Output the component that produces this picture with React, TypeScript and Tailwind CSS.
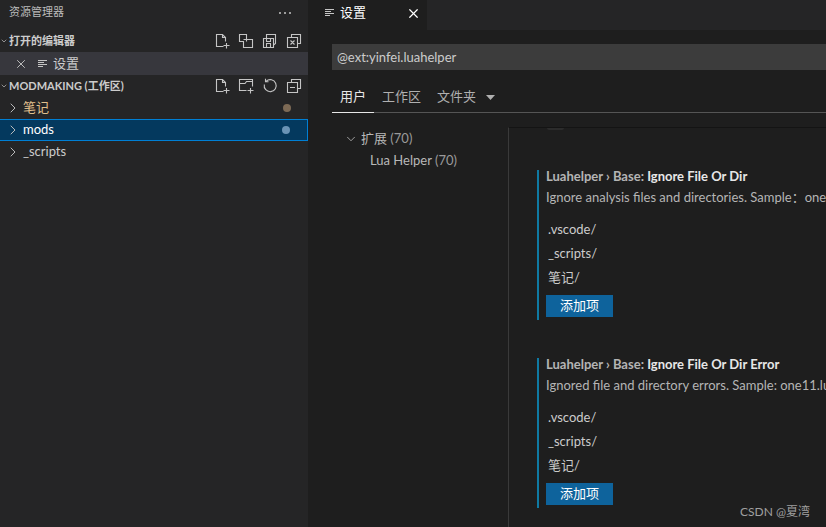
import { ChevronDown, ChevronRight, X } from "lucide-react"

const font = "font-['Lato','Noto_Sans_CJK_SC',sans-serif]"

const ListIcon = ({ className = "" }: { className?: string }) => (
  <svg width="10" height="10" viewBox="0 0 10 10" className={className} fill="none" stroke="currentColor" strokeWidth="1">
    <path d="M0 1.5h9M0 3.5h6M0 5.5h9M0 7.5h5" />
  </svg>
)

const HeaderIcon = ({ d }: { d: string }) => (
  <svg width="16" height="16" viewBox="0 0 16 16" fill="none" stroke="#c5c5c5" strokeWidth="1.1">
    <path d={d} />
  </svg>
)

const newFile = "M9.5 13.5H2.5V1.5H8.5L11.5 4.5V8.5M8.5 1.5V4.5H11.5M12.5 10V15.5M9.5 12.5H15.5"
const newFolder = "M8.5 12.5H1.5V1.5H14.5V8.5M1.5 5.5H7L8.5 3.5H14.5M12.5 10V15.5M9.5 12.5H15.5"
const saveAll = "M1.5 5.5H4.5V1.5H13.5V10.5L11.5 12M1.5 14.5H11.5V5.5H1.5V14.5ZM4.5 5.5V8.5H8.5V5.5M4.5 14.5V10.5H8.5V14.5"
const closeAll = "M5.5 4.5V1.5H14.5V10.5H11.5M1.5 4.5H11.5V14.5H1.5V4.5ZM4.5 7.5L8.5 11.5M8.5 7.5L4.5 11.5"
const collapse = "M5.5 4.5V1.5H14.5V10.5H11.5M1.5 4.5H11.5V14.5H1.5V4.5ZM4 9.5H9"
const split = "M1.5 1.5H8.5V6.5H14.5V14.5H5.5V8.5H1.5V1.5ZM5.5 6.5H8.5V8.5"
const refresh = "M4.2 3.2A6 6 0 1 1 2.3 6.5M3.5 0.8V3.8H6.5"

const SectionHeader = ({ label, icons }: { label: string; icons: string[] }) => (
  <div className="flex h-[22px] items-center pl-[0px] pr-[6px] text-[11px] font-bold text-[#cccccc]">
    <ChevronDown size={8} strokeWidth={2} className="mr-[1px] text-[#c5c5c5]" />
    <span className="flex-1 pt-[1px]">{label}</span>
    <div className="flex gap-[8px]">
      {icons.map((d, i) => (
        <HeaderIcon key={i} d={d} />
      ))}
    </div>
  </div>
)

const TreeRow = ({ label, color, dot, selected }: { label: string; color: string; dot?: string; selected?: boolean }) => (
  <div
    className={`flex h-[22px] items-center pr-[17px] text-[13px] ${
      selected ? "border border-[#007fd4] border-l-0 bg-[#04395e] pl-[5px]" : "pl-[5px]"
    }`}
    style={{ color }}
  >
    <ChevronRight size={16} strokeWidth={1.4} className="mr-[2px] shrink-0 text-[#c5c5c5]" />
    <span className="flex-1">{label}</span>
    {dot && <span className="h-2 w-2 rounded-full" style={{ backgroundColor: dot }} />}
  </div>
)

const Setting = ({ name, desc }: { name: string; desc: string }) => (
  <div className="h-[150px] w-[400px] border-l-2 border-[#0f7aa3] pl-[7px] whitespace-nowrap">
    <div className="flex h-[14px] items-center text-[13px] font-bold text-[#c5c5c5]">
      <span className="opacity-90">Luahelper › Base:&nbsp;</span>
      <span className="text-[#e7e7e7]">{name}</span>
    </div>
    <div className="mt-[4px] flex h-[20px] items-center text-[13px] text-[#b5b5b5]">{desc}</div>
    <div className="mt-[10px] flex flex-col pl-[2px] text-[13px] text-[#cccccc]">
      <div className="flex h-[24px] items-center">.vscode/</div>
      <div className="flex h-[24px] items-center">_scripts/</div>
      <div className="flex h-[24px] items-center">笔记/</div>
    </div>
    <div className="mt-[5px] flex h-[22px] w-[67px] items-center justify-center bg-[#0e639c] text-[13px] text-white">
      添加项
    </div>
  </div>
)

export default function App() {
  return (
    <div className={`relative flex h-[527px] w-[826px] overflow-hidden bg-[#1e1e1e] ${font}`}>
      {/* Explorer */}
      <div className="flex w-[308px] shrink-0 flex-col bg-[#252526]">
        <div className="flex h-[30px] items-center justify-between pl-[9px] pr-[16px] pb-[5px] text-[11px] text-[#bbbbbb]">
          <span>资源管理器</span>
          <svg width="14" height="4" viewBox="0 0 14 4" fill="#c5c5c5">
            <circle cx="2" cy="2" r="1" />
            <circle cx="7" cy="2" r="1" />
            <circle cx="12" cy="2" r="1" />
          </svg>
        </div>
        <SectionHeader label="打开的编辑器" icons={[newFile, split, saveAll, closeAll]} />
        <div className="flex h-[23px] items-center bg-[#37373d] pl-[14px] text-[13px] text-[#cccccc]">
          <X size={14} strokeWidth={1.6} className="mr-[10px] text-[#c5c5c5]" />
          <ListIcon className="mr-[5px] text-[#c5c5c5]" />
          <span>设置</span>
        </div>
        <SectionHeader label="MODMAKING (工作区)" icons={[newFile, newFolder, refresh, collapse]} />
        <TreeRow label="笔记" color="#e2c08d" dot="#7d6a55" />
        <TreeRow label="mods" color="#ffffff" dot="#6a93b5" selected />
        <TreeRow label="_scripts" color="#cccccc" />
      </div>

      {/* Editor */}
      <div className="flex min-w-0 flex-1 flex-col">
        <div className="flex h-[30px] shrink-0 bg-[#252526]">
          <div className="flex w-[119px] items-center bg-[#1e1e1e] pb-[4px] pl-[17px] pr-[6px] text-[13px] text-white">
            <ListIcon className="mr-[5px] text-[#c5c5c5]" />
            <span className="flex-1">设置</span>
            <X size={15} strokeWidth={1.9} />
          </div>
        </div>

        <div className="flex min-h-0 flex-1 flex-col pl-[24px]">
          <div className="mt-[14px] flex h-[26px] shrink-0 items-center bg-[#3c3c3c] pl-[5px] pt-[2px] text-[13px] text-[#cccccc]">
            @ext:yinfei.luahelper
          </div>
          <div className="mt-[14px] flex h-[29px] shrink-0 items-start border-b border-[#555555] text-[13px] text-[#b0b0b0]">
            <div className="flex h-[29px] w-[42px] items-center justify-center border-b border-[#e7e7e7] pb-[3px] text-[#e7e7e7]">
              用户
            </div>
            <div className="ml-[8px] flex h-[28px] items-center pb-[3px]">工作区</div>
            <div className="ml-[16px] flex h-[28px] items-center pb-[3px]">
              文件夹
              <svg width="9" height="5" viewBox="0 0 9 5" className="ml-[10px] mt-[2px] text-[#b0b0b0]" fill="currentColor">
                <path d="M0 0h9L4.5 5z" />
              </svg>
            </div>
          </div>

          <div className="flex min-h-0 flex-1">
            <div className="w-[176px] shrink-0 pt-[15px] text-[13px] text-[#b8b8b8]">
              <div className="flex h-[22px] items-center pl-[12px]">
                <ChevronDown size={14} strokeWidth={1.3} className="mr-[3px] text-[#c5c5c5]" />
                <span>
                  扩展 <span className="text-[#9a9a9a]">(70)</span>
                </span>
              </div>
              <div className="flex h-[22px] items-center pl-[38px]">
                <span>
                  Lua Helper <span className="text-[#9a9a9a]">(70)</span>
                </span>
              </div>
            </div>
            <div className="relative mt-[14px] min-w-0 flex-1 overflow-hidden border-l border-t border-l-[#3a3a3a] border-t-[#141414] pl-[28px] pt-[42px]">
              <div className="absolute left-[38px] top-0 h-[2px] w-[17px] rounded-b-sm bg-[#2c2c2c]" />
              <div className="flex flex-col gap-[38px]">
                <Setting name="Ignore File Or Dir" desc="Ignore analysis files and directories. Sample：one11.lua" />
                <Setting name="Ignore File Or Dir Error" desc="Ignored file and directory errors. Sample: one11.lua" />
              </div>
            </div>
          </div>
        </div>
      </div>

      {/* Watermark */}
      <div className="absolute right-[16px] top-[503px] text-[12px] text-[#a0a0a0]">CSDN @夏湾</div>
    </div>
  )
}
